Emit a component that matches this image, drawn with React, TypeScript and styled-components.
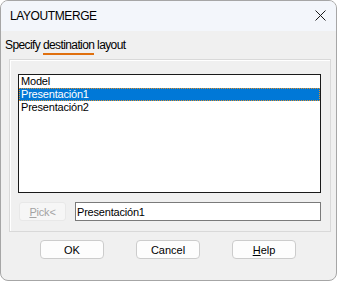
import React, { useState } from "react";
import styled, { createGlobalStyle } from "styled-components";

const GlobalStyle = createGlobalStyle`
  html, body {
    margin: 0;
    padding: 0;
    background: #ffffff;
  }
  * {
    box-sizing: border-box;
  }
`;

const Window = styled.div`
  width: 337px;
  height: 281px;
  border: 1px solid #a6a6a6;
  border-radius: 8px;
  overflow: hidden;
  background: #f0f0f0;
  display: flex;
  flex-direction: column;
  font-family: "Liberation Sans", Arial, sans-serif;
  color: #000;
`;

const TitleBar = styled.div`
  height: 30px;
  flex: none;
  background: #f3f6fb;
  display: flex;
  align-items: center;
  justify-content: space-between;
  padding: 0 9px 0 9px;
`;

const Title = styled.span`
  font-size: 12px;
  letter-spacing: -0.4px;
`;

const CloseButton = styled.button`
  width: 12px;
  height: 12px;
  padding: 0;
  border: none;
  background: none;
  display: flex;
`;

const Body = styled.div`
  flex: 1;
  display: flex;
  flex-direction: column;
  padding: 4px 5px 0 4px;
`;

const Prompt = styled.div`
  font-size: 12px;
  height: 24px;
  line-height: 20px;
  letter-spacing: -0.6px;
`;

const Accent = styled.span`
  border-bottom: 2px solid #e0700f;
  padding-bottom: 1px;
`;

const GroupBox = styled.div`
  margin-left: 4px;
  width: 322px;
  height: 173px;
  border: 1px solid #d9d9d9;
  box-shadow: inset 1px 1px 0 #ffffff;
  padding: 14px 8px 10px 8px;
  display: flex;
  flex-direction: column;
  gap: 9px;
`;

const ListBox = styled.ul`
  margin: 0;
  padding: 0;
  list-style: none;
  height: 119px;
  width: 303px;
  background: #ffffff;
  border: 1px solid #1a1a1a;
`;

const ListItem = styled.li<{ $selected?: boolean }>`
  height: 13px;
  line-height: 13px;
  font-size: 11px;
  padding-left: 2px;
  letter-spacing: -0.2px;
  background: ${(p) => (p.$selected ? "#0078d7" : "transparent")};
  color: ${(p) => (p.$selected ? "#ffffff" : "#000000")};
  outline: ${(p) => (p.$selected ? "1px dotted #e0902a" : "none")};
  outline-offset: -1px;
  cursor: default;
`;

const PickRow = styled.div`
  display: flex;
  align-items: center;
  height: 19px;
`;

const PickButton = styled.button`
  width: 47px;
  height: 19px;
  margin-left: 1px;
  margin-right: 9px;
  padding: 0;
  border: 1px solid #e8e8e8;
  border-radius: 3px;
  background: #f6f6f6;
  color: #a3a3a3;
  font-family: inherit;
  font-size: 11px;
  letter-spacing: -0.2px;
`;

const Mnemonic = styled.span`
  text-decoration: underline;
`;

const TextField = styled.input`
  width: 246px;
  height: 19px;
  border: 1px solid #7a7a7a;
  background: #ffffff;
  padding: 0 1px;
  font-family: inherit;
  font-size: 11px;
  letter-spacing: -0.2px;
  outline: none;
`;

const ButtonRow = styled.div`
  display: flex;
  gap: 32px;
  padding-left: 35px;
  margin-top: 8px;
`;

const DialogButton = styled.button`
  width: 64px;
  height: 19px;
  padding: 0;
  border: 1px solid #cccccc;
  border-radius: 4px;
  background: #fdfdfd;
  font-family: inherit;
  font-size: 11px;
  color: #000;
`;

const items = ["Model", "Presentación1", "Presentación2"];

export default function App() {
  const [selected, setSelected] = useState(1);
  return (
    <>
      <GlobalStyle />
      <Window>
        <TitleBar>
          <Title>LAYOUTMERGE</Title>
          <CloseButton aria-label="Close">
            <svg width="11" height="11" viewBox="0 0 11 11">
              <path d="M0.5 0.5 L10.5 10.5 M10.5 0.5 L0.5 10.5" stroke="#1a1a1a" strokeWidth="1" fill="none" />
            </svg>
          </CloseButton>
        </TitleBar>
        <Body>
          <Prompt>
            Specify <Accent>destination</Accent> layout
          </Prompt>
          <GroupBox>
            <ListBox>
              {items.map((it, i) => (
                <ListItem key={it} $selected={i === selected} onClick={() => setSelected(i)}>
                  {it}
                </ListItem>
              ))}
            </ListBox>
            <PickRow>
              <PickButton disabled>
                <Mnemonic>P</Mnemonic>ick&lt;
              </PickButton>
              <TextField readOnly value={items[selected]} />
            </PickRow>
          </GroupBox>
          <ButtonRow>
            <DialogButton>OK</DialogButton>
            <DialogButton>Cancel</DialogButton>
            <DialogButton>
              <Mnemonic>H</Mnemonic>elp
            </DialogButton>
          </ButtonRow>
        </Body>
      </Window>
    </>
  );
}
